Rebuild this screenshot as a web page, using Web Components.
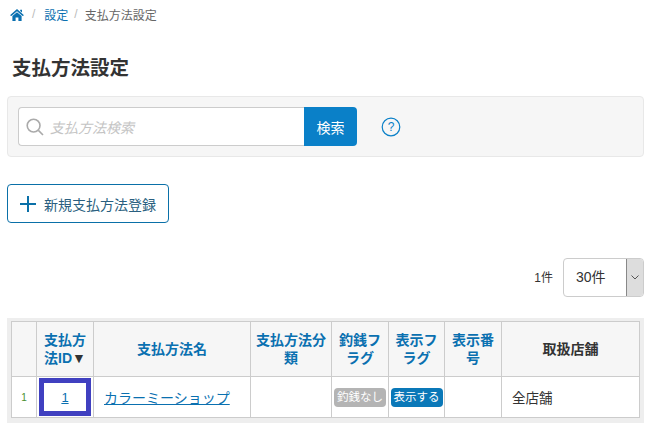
<!DOCTYPE html>
<html lang="ja">
<head>
<meta charset="utf-8">
<title>支払方法設定</title>
<style>
  html, body { margin: 0; background: #fff; overflow: hidden; }
  body { font-family: "Liberation Sans", "Noto Sans CJK JP", sans-serif; color: #333; height: 440px; }
</style>
</head>
<body>
<pay-breadcrumb></pay-breadcrumb>
<pay-title>支払方法設定</pay-title>
<pay-search></pay-search>
<pay-new-button>新規支払方法登録</pay-new-button>
<pay-pager></pay-pager>
<pay-table></pay-table>

<script>
const crumbTpl = document.createElement('template');
crumbTpl.innerHTML = `
  <style>
    :host { display: flex; align-items: center; height: 30px; padding-left: 10px; font-size: 12px; color: #666; }
    a { color: #0a70b0; text-decoration: none; }
    svg { display: block; width: 14px; height: 12px; fill: #0a70b0; margin-top: -1px; }
    span, a { position: relative; top: -1px; }
    .sep { color: #bbb; }
    .sep.first { margin: 0 9px 0 8px; }
    .sep.second { margin: 0 7px 0 6px; }
  </style>
  <svg viewBox="0 0 14 12"><path d="M7 0 L14 6.2 L12.6 7 L7 2.2 L1.4 7 L0 6.2 Z M2.4 7 L7 3.2 L11.6 7 V12 H8.4 V8.4 H5.6 V12 H2.4 Z M10.2 .8 H12 V3.4 L10.2 2 Z"/></svg>
  <span class="sep first">/</span>
  <a href="#">設定</a>
  <span class="sep second">/</span>
  <span>支払方法設定</span>
`;
class PayBreadcrumb extends HTMLElement {
  constructor() {
    super();
    this.attachShadow({mode:'open'}).appendChild(crumbTpl.content.cloneNode(true));
  }
}
customElements.define('pay-breadcrumb', PayBreadcrumb);

const titleTpl = document.createElement('template');
titleTpl.innerHTML = `
  <style>
    :host { display: block; padding: 24px 0 0 12px; height: 42px; font-size: 19.5px; line-height: 28px; font-weight: 700; color: #333; }
  </style>
  <slot></slot>
`;
class PayTitle extends HTMLElement {
  constructor() {
    super();
    this.attachShadow({mode:'open'}).appendChild(titleTpl.content.cloneNode(true));
  }
}
customElements.define('pay-title', PayTitle);

const searchTpl = document.createElement('template');
searchTpl.innerHTML = `
  <style>
    :host { display: flex; align-items: center; box-sizing: border-box; height: 61px; width: 637px; margin-left: 7px; padding-left: 10px; background: #f6f6f6; border: 1px solid #e8e8e8; border-radius: 4px; }
    .box { display: flex; align-items: center; box-sizing: border-box; width: 286px; height: 39px; background: #fff; border: 1px solid #ccc; border-right: 0; border-radius: 4px 0 0 4px; padding-left: 7px; }
    .box svg { width: 18px; height: 18px; flex: none; fill: none; stroke: #aaa; stroke-width: 1.6; }
    .ph { margin-left: 6px; font-size: 14px; font-style: italic; color: #c4c4c4; }
    .go { display: flex; align-items: center; justify-content: center; width: 53px; height: 39px; background: #0a80c8; color: #fff; font-size: 14px; border-radius: 0 4px 4px 0; }
    .help { width: 20px; height: 20px; margin-left: 24px; display: block; }
  </style>
  <div class="box">
    <svg viewBox="0 0 18 18"><circle cx="7.6" cy="7.6" r="6.4"/><path d="M12.4 12.4 L17 17"/></svg>
    <span class="ph">支払方法検索</span>
  </div>
  <div class="go">検索</div>
  <svg class="help" viewBox="0 0 20 20"><circle cx="10" cy="10" r="8.8" fill="none" stroke="#0a80c8" stroke-width="1.2"/><text x="10" y="14.2" text-anchor="middle" font-size="12" font-family="Liberation Sans" fill="#0a80c8">?</text></svg>
`;
class PaySearch extends HTMLElement {
  constructor() {
    super();
    this.attachShadow({mode:'open'}).appendChild(searchTpl.content.cloneNode(true));
  }
}
customElements.define('pay-search', PaySearch);

const newTpl = document.createElement('template');
newTpl.innerHTML = `
  <style>
    :host { display: flex; align-items: center; box-sizing: border-box; width: 162px; height: 39px; margin: 27px 0 0 7px; padding-left: 12px; background: #fff; border: 1px solid #0a70a8; border-radius: 4px; color: #2a5f80; font-size: 14px; }
    svg { width: 16px; height: 16px; margin-right: 8px; flex: none; stroke: #0a70a8; stroke-width: 2; }
  </style>
  <svg viewBox="0 0 16 16"><path d="M8 0 V16 M0 8 H16"/></svg>
  <slot></slot>
`;
class PayNewButton extends HTMLElement {
  constructor() {
    super();
    this.attachShadow({mode:'open'}).appendChild(newTpl.content.cloneNode(true));
  }
}
customElements.define('pay-new-button', PayNewButton);

const pagerTpl = document.createElement('template');
pagerTpl.innerHTML = `
  <style>
    :host { display: flex; align-items: center; justify-content: flex-end; width: 644px; height: 39px; margin-top: 35px; }
    .count { font-size: 12px; color: #333; margin-right: 10px; position: relative; top: -1px; }
    .sel { display: flex; box-sizing: border-box; width: 81px; height: 39px; border: 1px solid #ccc; border-radius: 4px; overflow: hidden; background: #fff; }
    .val { flex: 1; font-size: 14px; line-height: 37px; padding-left: 12px; color: #333; }
    .arrow { display: flex; align-items: center; justify-content: center; width: 16px; background: #ddd; border-left: 1px solid #888; }
    .arrow svg { width: 8px; height: 5px; fill: none; stroke: #555; stroke-width: 1; }
  </style>
  <span class="count">1件</span>
  <div class="sel">
    <div class="val">30件</div>
    <div class="arrow"><svg viewBox="0 0 8 5"><path d="M.5 .5 L4 4 L7.5 .5"/></svg></div>
  </div>
`;
class PayPager extends HTMLElement {
  constructor() {
    super();
    this.attachShadow({mode:'open'}).appendChild(pagerTpl.content.cloneNode(true));
  }
}
customElements.define('pay-pager', PayPager);

const tableTpl = document.createElement('template');
tableTpl.innerHTML = `
  <style>
    :host { display: block; box-sizing: border-box; width: 637px; margin: 21px 0 0 7px; padding: 3px 5px 5px 4px; background: #eee; }
    table { border-collapse: collapse; table-layout: fixed; width: 628px; background: #fff; font-size: 13px; }
    th, td { border: 1px solid #ccc; padding: 0; text-align: center; }
    thead tr { height: 55px; }
    tbody tr { height: 41px; }
    th { background: #f6f6f6; color: #0a70b0; font-size: 14px; font-weight: 700; line-height: 18px; }
    th.plain { color: #333; }
    th b { color: #333; }
    .idx { font-size: 10px; color: #4a9030; }
    .focus a { display: flex; align-items: center; justify-content: center; box-sizing: border-box; height: 38px; margin: 1px 2px; border: 5px solid #4040c0; color: #0a70b0; }
    a { color: #0a70b0; }
    .name { text-align: left; padding-left: 10px; font-size: 14px; }
    .shop { text-align: left; padding-left: 10px; color: #333; font-size: 13.5px; }
    .tag { display: inline-block; font-size: 11.5px; line-height: 19px; padding: 0 3px; border-radius: 4px; color: #fff; white-space: nowrap; }
    .off { background: #b4b4b4; }
    .on { background: #0a78b8; }
  </style>
  <table>
    <colgroup>
      <col style="width:25px"><col style="width:57px"><col style="width:157px"><col style="width:81px">
      <col style="width:57px"><col style="width:56px"><col style="width:57px"><col style="width:138px">
    </colgroup>
    <thead>
      <tr>
        <th></th>
        <th>支払方<br>法ID<b>▼</b></th>
        <th>支払方法名</th>
        <th>支払方法分<br>類</th>
        <th>釣銭フ<br>ラグ</th>
        <th>表示フ<br>ラグ</th>
        <th>表示番<br>号</th>
        <th class="plain">取扱店舗</th>
      </tr>
    </thead>
    <tbody>
      <tr>
        <td class="idx">1</td>
        <td class="focus"><a href="#">1</a></td>
        <td class="name"><a href="#">カラーミーショップ</a></td>
        <td></td>
        <td><span class="tag off">釣銭なし</span></td>
        <td><span class="tag on">表示する</span></td>
        <td></td>
        <td class="shop">全店舗</td>
      </tr>
    </tbody>
  </table>
`;
class PayTable extends HTMLElement {
  constructor() {
    super();
    this.attachShadow({mode:'open'}).appendChild(tableTpl.content.cloneNode(true));
  }
}
customElements.define('pay-table', PayTable);
</script>
</body>
</html>
